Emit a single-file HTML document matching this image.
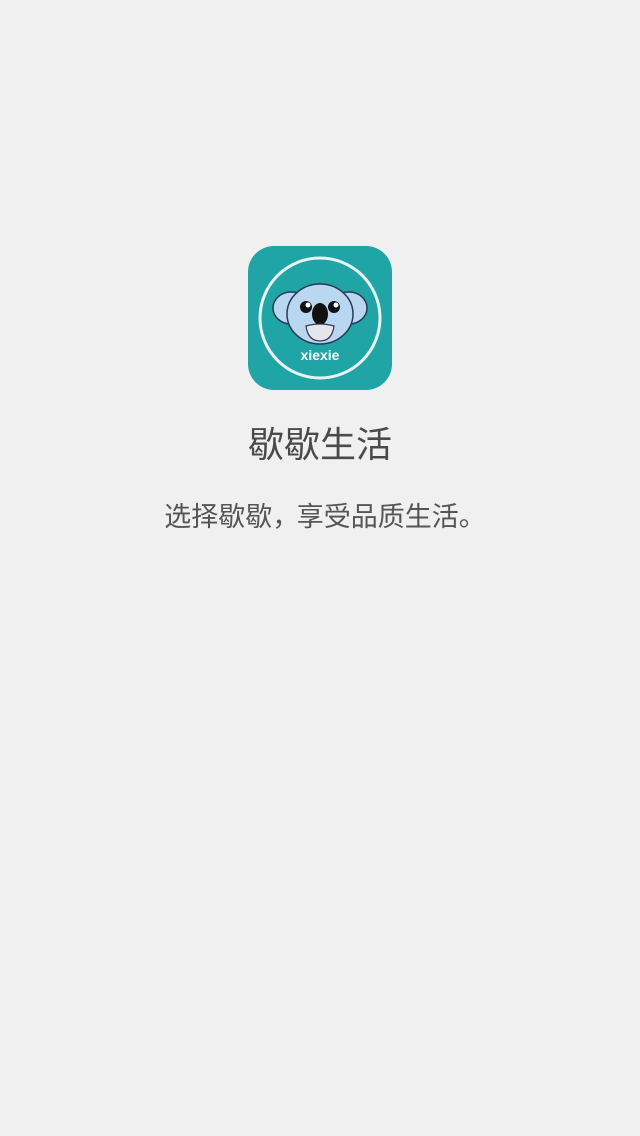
<!DOCTYPE html>
<html><head><meta charset="utf-8"><style>
body{margin:0;width:640px;height:1136px;background:#f0f0f0;position:relative;font-family:"Liberation Sans","Noto Sans CJK SC",sans-serif;}
.icon{position:absolute;left:248px;top:246px;width:144px;height:144px;border-radius:26px;background:#1fa5a6;overflow:hidden}
.t1{position:absolute;top:416px;width:640px;text-align:center;font-size:36px;color:#4a4a4a}
.t2{position:absolute;top:495px;left:5px;width:640px;text-align:center;font-size:27px;color:#555}
</style></head><body>
<div class="icon"><svg width="144" height="144" viewBox="0 0 144 144">
<circle cx="72" cy="72" r="60" fill="none" stroke="#e8f4f2" stroke-width="3"/>
<ellipse cx="43" cy="62" rx="18" ry="16" fill="#b9d7f0" stroke="#2a3a55" stroke-width="1.5"/>
<ellipse cx="101" cy="62" rx="18" ry="16" fill="#b9d7f0" stroke="#2a3a55" stroke-width="1.5"/>
<ellipse cx="72" cy="68" rx="33" ry="30" fill="#b9d7f0" stroke="#2a3a55" stroke-width="1.5"/>
<circle cx="58" cy="61" r="6" fill="#111"/><circle cx="86" cy="61" r="6" fill="#111"/>
<circle cx="60" cy="59" r="2.5" fill="#fff"/><circle cx="88" cy="59" r="2.5" fill="#fff"/>
<ellipse cx="72" cy="68" rx="8" ry="11" fill="#111"/>
<path d="M58 80 Q72 76 86 80 Q84 95 72 95 Q60 95 58 80Z" fill="#e6e6ea" stroke="#2a3a55" stroke-width="1.2"/>
<text x="72" y="114" text-anchor="middle" font-size="14" font-weight="bold" fill="#fff" font-family="Liberation Sans">xiexie</text>
</svg></div>
<div class="t1">歇歇生活</div>
<div class="t2">选择歇歇<span style="letter-spacing:-10px">，</span> 享受品质生活。</div>
</body></html>
